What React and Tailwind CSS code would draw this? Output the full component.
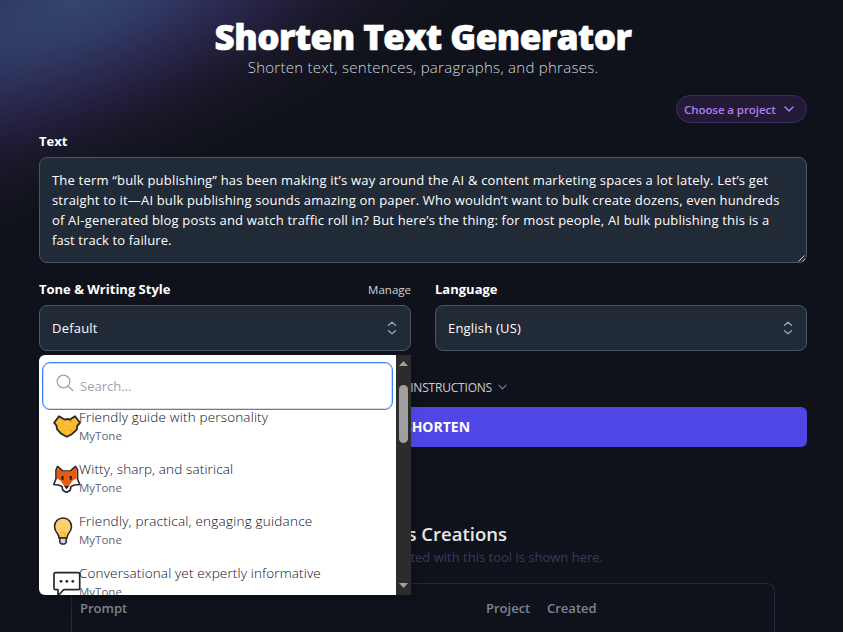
import React, { useState } from 'react';

const paragraph = [
  { text: 'The term “bulk publishing” has been making it’s way around the AI & content marketing spaces a lot lately. Let’s get', cls: 'tracking-[0.2px]' },
  { text: 'straight to it—AI bulk publishing sounds amazing on paper. Who wouldn’t want to bulk create dozens, even hundreds', cls: 'tracking-[0.17px]' },
  { text: 'of AI-generated blog posts and watch traffic roll in? But here’s the thing: for most people, AI bulk publishing this is a', cls: 'tracking-[0.18px]' },
  { text: 'fast track to failure.', cls: 'tracking-[0.1px]' },
];

const tones = [
  { name: 'Friendly guide with personality', Icon: HandshakeIcon, cls: 'tracking-[0.17px]' },
  { name: 'Witty, sharp, and satirical', Icon: FoxIcon, cls: 'tracking-[0.14px]' },
  { name: 'Friendly, practical, engaging guidance', Icon: BulbIcon, cls: 'tracking-[0.23px]' },
  { name: 'Conversational yet expertly informative', Icon: SpeechIcon, cls: 'tracking-[0.15px]' },
];

function HandshakeIcon() {
  return (
    <svg width="28" height="28" viewBox="0 0 28 28" className="shrink-0">
      <path
        d="M1.2 9.8 6 3.200l4.200 2.600 1.800.8 2.500-.8 2 .8 2-1 3.500-2.400 5 6.600-2.800 3-.4 3.800-5 4.600-5 2.600-5.500-3-4.300-4.700-.6-3.800z"
        fill="#fcb92b"
        stroke="#262626"
        strokeWidth="1.8"
        strokeLinejoin="round"
      />
      <path d="m6 8 1 .5M11 9l1 .5M8 12h1M15 11l1 .5M12 15h1M18 14h1M14 19h1" stroke="#ffe08a" strokeWidth="1" />
      <path d="m17 8 2 .8M19 17l-1 1" stroke="#ef6a2c" strokeWidth="1" />
    </svg>
  );
}

function FoxIcon() {
  return (
    <svg width="28" height="28" viewBox="0 0 28 28" className="shrink-0">
      <path
        d="M4.500 1.500 9.500 6h8l5-4.500L24.500 5v9l2.300 5.500-5.300.5-3.500 1.500-.8 3.700-3.700 2.300-3.700-2.300-.8-3.700L5.500 20l-4.800-.5L3 14V5z"
        fill="#fff"
        stroke="#2b2b2b"
        strokeWidth="1.7"
        strokeLinejoin="round"
      />
      <path d="M4.900 2.800 9.300 6.800h8.400l4.500-4 1.500 2.700v8l-3.700 1.800-4.300 6.200h-4.200L7.300 15.300 3.800 13.500V5.500z" fill="#ea5a0c" />
      <path d="M9.500 11v3.800M17.800 11v3.800" stroke="#222" strokeWidth="2.2" />
      <path d="M11 21h5.200l-2.600 3.200z" fill="#1f1f1f" />
    </svg>
  );
}

function BulbIcon() {
  return (
    <svg width="28" height="28" viewBox="0 0 28 28" className="shrink-0">
      <path
        d="M10 1c5 0 8.500 3.800 8.500 8.600 0 3.600-1.700 5.400-3.200 7.400-1 1.400-1.200 2.500-1.300 4H6c-.1-1.500-.4-2.600-1.300-4-1.500-2-3.200-3.800-3.200-7.400C1.500 4.800 5 1 10 1z"
        fill="#ffcf6b"
        stroke="#26262b"
        strokeWidth="1.6"
      />
      <path d="m8 15 .8 5.500M12 15l-.8 5.500M7.500 15l1.500 1 1-1 1 1 1.500-1" fill="none" stroke="#fcb316" strokeWidth="1.2" />
      <path d="M6.800 21h6.400v4.500L11.500 27h-3l-1.700-1.500z" fill="#d4d4dc" stroke="#26262b" strokeWidth="1.5" />
    </svg>
  );
}

function SpeechIcon() {
  return (
    <svg width="28" height="28" viewBox="0 0 28 28" className="shrink-0">
      <path
        d="M2.500 3.700h22.700q1.500 0 1.500 1.500v14q0 1.500-1.500 1.500H10.500L5 27v-6.300H2.500Q1 20.700 1 19.200v-14q0-1.500 1.500-1.500z"
        fill="#fff"
        stroke="#26262b"
        strokeWidth="1.7"
        strokeLinejoin="round"
      />
      <circle cx="8" cy="12.300" r="1.400" fill="#26262b" />
      <circle cx="13.900" cy="12.300" r="1.400" fill="#26262b" />
      <circle cx="19.800" cy="12.300" r="1.400" fill="#26262b" />
    </svg>
  );
}

function Chevron({ className }) {
  return (
    <svg viewBox="0 0 10 6" className={className} fill="none" stroke="currentColor" strokeLinecap="round" strokeLinejoin="round">
      <path d="m1 1 4 4 4-4" />
    </svg>
  );
}

function SelectBox({ value }) {
  return (
    <button
      type="button"
      className="flex h-[46px] w-full items-center justify-between rounded-lg border border-[#4b5563] bg-[#212a37] pr-[13px] pl-3 text-left text-[13px] text-white"
    >
      <span className="pt-[2px] tracking-[0.2px]">{value}</span>
      <svg width="10" height="14" viewBox="0 0 10 14" fill="none" stroke="#9ca3af" strokeWidth="1.4" strokeLinecap="round" strokeLinejoin="round">
        <path d="m1.500 4.200 3.500-3 3.500 3M1.500 9.800l3.500 3 3.500-3" />
      </svg>
    </button>
  );
}

function ToneMenu({ search, onSearch }) {
  return (
    <div className="absolute top-[50px] left-0 z-10 flex h-[240px] w-[372px] overflow-hidden rounded-l-md bg-white shadow-lg">
      <div className="flex min-w-0 flex-1 flex-col overflow-hidden pt-[7px] pl-[3px]">
        <label className="flex h-[48px] w-[351px] shrink-0 items-center rounded-lg border border-[#3b82f6] pl-[13px] shadow-[inset_0_0_0_1px_#d7d9e2]">
          <svg width="18" height="18" viewBox="0 0 18 18" fill="none" stroke="#a1a3ac" strokeWidth="1.3" strokeLinecap="round" className="mb-[6px] shrink-0">
            <circle cx="7.500" cy="7.500" r="6.300" />
            <path d="m12.200 12.200 4.600 4.300" />
          </svg>
          <input
            value={search}
            onChange={(e) => onSearch(e.target.value)}
            placeholder="Search..."
            className="ml-[6px] w-[200px] pt-[2px] text-[13px] text-gray-900 outline-none placeholder:text-[#9ca3af]"
          />
        </label>
        <ul className="-mt-[3px] flex flex-col">
          {tones.map(({ name, Icon, cls }) => (
            <li key={name} className="flex h-[52px] shrink-0 items-start pl-[11px]">
              <span className="mt-[6px] flex w-[26px] shrink-0">
                <Icon />
              </span>
              <span className="flex flex-col whitespace-nowrap">
                <span className={`text-[13.5px] leading-5 font-light text-[#0b0d1c] ${cls}`}>{name}</span>
                <span className="text-[11.5px] leading-[18px] text-[#5c6575]">MyTone</span>
              </span>
            </li>
          ))}
        </ul>
      </div>
      <div className="flex w-[15px] shrink-0 flex-col items-center bg-[#2c2c2c] pt-[6px] pb-[7px]">
        <svg width="9" height="5" viewBox="0 0 9 5" fill="#9f9f9f"><path d="M0 5 4.500 0 9 5z" /></svg>
        <div className="mt-[19px] h-[58px] w-[9px] rounded-full bg-[#9f9f9f]" />
        <svg width="9" height="5" viewBox="0 0 9 5" fill="#9f9f9f" className="mt-auto"><path d="M0 0 4.500 5 9 0z" /></svg>
      </div>
    </div>
  );
}

export default function App() {
  const [search, setSearch] = useState('');

  return (
    <div className="relative h-[632px] w-[843px] overflow-hidden bg-[#10121b] px-[36px] font-['Open_Sans','Noto_Sans',sans-serif] text-white">
      {/* Corner glow */}
      <div className="absolute -top-[190px] -left-[450px] h-[380px] w-[1060px] -rotate-[22deg] bg-[radial-gradient(closest-side,#34456d_0%,#313c66_18%,#2b2b52_38%,#231f3d_54%,#191829_70%,#13141f_86%,#10121b00_100%)]" />

      <div className="relative flex h-full flex-col pl-[3px] *:shrink-0">
        <header className="flex flex-col items-center whitespace-nowrap">
          <h1 className="mt-[17px] text-[35px] leading-[40px] font-extrabold tracking-[-0.5px] [-webkit-text-stroke:0.7px_white]">Shorten Text Generator</h1>
          <p className="text-[15px] leading-5 font-light tracking-[0.27px] text-[#d1d5db]">Shorten text, sentences, paragraphs, and phrases.</p>
        </header>

        <button
          type="button"
          className="mt-[18px] flex h-[28px] w-[131px] items-center self-end rounded-full border border-[#3a2d62] bg-[#231b36] pl-[7px] text-[11.5px] font-semibold whitespace-nowrap text-[#b07df0]"
        >
          <span className="w-[100px] pt-[2px] text-left tracking-[-0.07px]">Choose a project</span>
          <Chevron className="h-[6px] w-[10px] stroke-[1.5]" />
        </button>

        <label className="mt-[8px] text-[13px] leading-5 font-bold">Text</label>
        <div className="relative mt-[6px] h-[106px] rounded-lg border border-[#4b5563] bg-[#212a37] px-3 pt-[12px] text-[13px] leading-5 whitespace-nowrap">
          {paragraph.map(({ text, cls }) => (
            <p key={text}>
              <span className={cls}>{text}</span>
            </p>
          ))}
          <svg width="8" height="8" viewBox="0 0 8 8" className="absolute right-0 bottom-0" stroke="#c8ccd2">
            <path d="M.5 7.500l6-6M4.500 7.500l2.500-2.500" />
          </svg>
        </div>

        <div className="mt-4 grid grid-cols-2 gap-6">
          <div>
            <div className="mb-[6px] flex h-5 items-center justify-between leading-5">
              <span className="text-[13px] font-bold">Tone &amp; Writing Style</span>
              <span className="pt-[2px] text-[11.5px] text-[#d1d5db]">Manage</span>
            </div>
            <div className="relative">
              <SelectBox value="Default" />
              <ToneMenu search={search} onSearch={setSearch} />
            </div>
          </div>
          <div>
            <div className="mb-[6px] text-[13px] leading-5 font-bold">Language</div>
            <SelectBox value="English (US)" />
          </div>
        </div>

        <div className="mt-[26px] flex h-[20px] items-center justify-end pr-[300px] text-[12px] tracking-[-0.2px] text-[#c9ccd4]">
          <span className="pt-[2px]">ADDITIONAL INSTRUCTIONS</span>
          <Chevron className="ml-[6px] h-[6px] w-[9px] stroke-[1.3] text-[#7a7fa0]" />
        </div>
        <button type="button" className="mt-[10px] h-[40px] rounded-md bg-[#5046e5] pb-[2px] pl-[28px] text-[14px] font-bold">
          SHORTEN
        </button>

        <h2 className="mt-[73px] mr-[300px] text-right text-[18.5px] leading-7 font-semibold whitespace-nowrap text-[#e5e7eb]">Your Previous Creations</h2>
        <p className="-mt-px mr-[204px] text-right text-[13px] leading-5 whitespace-nowrap text-[#363b5c]">Everything you created with this tool is shown here.</p>

        <div className="mt-[16px] mr-8 ml-8 flex h-[60px] rounded-t-lg border border-b-0 border-[#222839] pt-[14px] pl-[8px] text-[13px] leading-5 font-semibold text-[#7d8597]">
          <span className="w-[406px]">Prompt</span>
          <span className="w-[61px]">Project</span>
          <span>Created</span>
        </div>
      </div>
    </div>
  );
}
